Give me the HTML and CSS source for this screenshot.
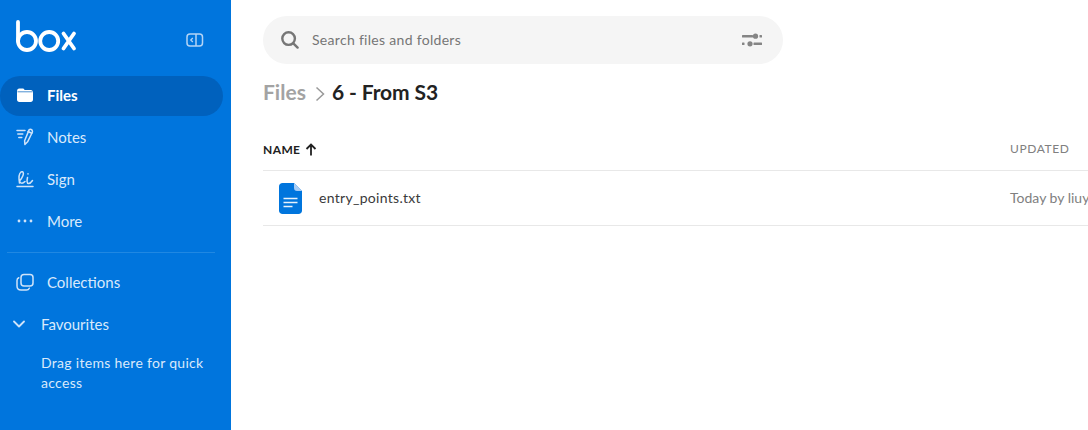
FILE: index.html
```html
<!DOCTYPE html>
<html lang="en">
<head>
<meta charset="utf-8">
<title>Files</title>
<link rel="stylesheet" href="styles.css">
</head>
<body>
<aside class="sidebar">
  <div class="brand">
    <svg class="logo" width="62" height="32" viewBox="0 0 62 32" fill="none" stroke="#fff" stroke-width="3.8" stroke-linecap="round" aria-label="box">
      <path d="M3 2v19"/>
      <circle cx="12" cy="21" r="9"/>
      <circle cx="34.200" cy="21" r="9"/>
      <path d="M48.500 13.500l10.500 15M59 13.500l-10.500 15"/>
    </svg>
    <svg class="collapse" width="18" height="14" viewBox="0 0 18 14" fill="none" stroke="#b3d4f5" stroke-width="1.500">
      <rect x="1" y="1" width="15.500" height="12" rx="3"/>
      <path d="M10 1v12"/>
      <path d="M6.800 5L4.800 7l2 2" stroke-width="1.300"/>
    </svg>
  </div>
  <nav class="nav">
    <a class="nav-item active">
      <svg class="nav-icon" width="18" height="16" viewBox="0 0 18 16" fill="#fff"><path d="M1 4.500C1 2.600 1.800 1.600 3.400 1.600h3c1 0 1.600.4 2.200 1.400h6c1.600 0 2.400.9 2.400 2.400v7.200c0 1.500-.9 2.400-2.400 2.400H3.400C1.900 15 1 14.100 1 12.600z"/><path d="M1.500 4.800h15" stroke="#0061bd" stroke-width=".7"/></svg>
      <span>Files</span>
    </a>
    <a class="nav-item">
      <svg class="nav-icon" width="18" height="18" viewBox="0 0 18 18" fill="none" stroke="#cfe3f9" stroke-width="1.500" stroke-linecap="round" stroke-linejoin="round"><path d="M1 2.500h8M1.800 6h5M2.800 9.500h3"/><path d="M13.200 1.600c1.200-.8 3-.1 3.200 1.400.1.600 0 1-.2 1.500l-4.600 9.300-2.700 2.700-.3-3.800z"/><path d="M12 3.500l3.800 1.800"/></svg>
      <span>Notes</span>
    </a>
    <a class="nav-item">
      <svg class="nav-icon" width="18" height="18" viewBox="0 0 18 18" fill="none" stroke="#cfe3f9" stroke-width="1.500" stroke-linecap="round" stroke-linejoin="round"><path d="M1 16.500h16"/><path d="M3.500 13C2.800 9 3 3.500 5 2c2-1.200 3 1 2 3.500C6 8 4.500 10 3.500 11c.5 2.500 3 3 5.500.5"/><path d="M11.500 7.500c-.5 2.500-1 6 1 6 1.500 0 3-1.500 4-3"/><path d="M12 3.800v.1"/></svg>
      <span>Sign</span>
    </a>
    <a class="nav-item">
      <svg class="nav-icon" width="18" height="4" viewBox="0 0 18 4" fill="#cfe3f9"><circle cx="3" cy="2" r="1.400"/><circle cx="9" cy="2" r="1.400"/><circle cx="15" cy="2" r="1.400"/></svg>
      <span>More</span>
    </a>
  </nav>
  <hr class="divider">
  <nav class="nav">
    <a class="nav-item">
      <svg class="nav-icon" width="18" height="18" viewBox="0 0 18 18" fill="none" stroke="#cfe3f9" stroke-width="1.500" stroke-linecap="round"><rect x="5" y="1.500" width="12" height="11.500" rx="3"/><path d="M2.800 4.800C1.600 5.300 1 6.200 1 7.500v5.500c0 2.400 1.500 4 4 4h5.500c1.300 0 2.300-.7 2.800-1.800"/></svg>
      <span>Collections</span>
    </a>
    <a class="nav-item nav-toggle">
      <svg class="chevron" width="12" height="8" viewBox="0 0 12 8" fill="none" stroke="#cfe3f9" stroke-width="1.800" stroke-linecap="round" stroke-linejoin="round"><path d="M1 1.500l5 5 5-5"/></svg>
      <span>Favourites</span>
    </a>
  </nav>
  <p class="hint">Drag items here for quick access</p>
</aside>
<main class="main">
  <div class="search">
    <svg class="search-icon" width="18" height="18" viewBox="0 0 18 18" fill="none" stroke="#767676" stroke-width="2.400" stroke-linecap="round"><circle cx="7.600" cy="7.600" r="6.300"/><path d="M12.300 12.300l4.300 4.300"/></svg>
    <span class="search-text">Search files and folders</span>
    <svg class="filter-icon" width="20" height="14" viewBox="0 0 20 14" fill="#858585"><rect x="0" y="2" width="11" height="2.400" rx=".5"/><circle cx="13.500" cy="3.200" r="2.600"/><rect x="17.500" y="2" width="2.500" height="2.400" rx=".5"/><rect x="0" y="9.600" width="2.500" height="2.400" rx=".5"/><circle cx="8" cy="10.800" r="2.600"/><rect x="11.500" y="9.600" width="8.500" height="2.400" rx=".5"/></svg>
  </div>
  <div class="crumbs">
    <span class="crumb-parent">Files</span>
    <svg class="crumb-sep" width="10" height="16" viewBox="0 0 10 16" fill="none" stroke="#999" stroke-width="1.500"><path d="M1.500 1.500L8.500 8l-7 6.500"/></svg>
    <span class="crumb-current">6 - From S3</span>
  </div>
  <div class="table">
    <div class="row head">
      <div class="cell-name">
        <span class="col-name">NAME</span>
        <svg width="12" height="13" viewBox="0 0 12 13" fill="none" stroke="#222" stroke-width="1.800"><path d="M6 12.500V1.500M1.500 6L6 1.500 10.500 6"/></svg>
      </div>
      <div class="col-updated">UPDATED</div>
    </div>
    <div class="row file">
      <div class="cell-file">
        <svg width="23" height="31" viewBox="0 0 23 31"><path d="M3.500 0H15l8 8v19.500c0 2-1.500 3.500-3.500 3.500h-16C1.500 31 0 29.500 0 27.500v-24C0 1.500 1.500 0 3.500 0z" fill="#0075dd"/><path d="M15 0l8 8h-5c-1.800 0-3-1.200-3-3z" fill="#a8cdf5"/><path d="M4.500 15.500h14M4.500 19.500h14M4.500 23.500h9" stroke="#e8f2fc" stroke-width="1.500"/></svg>
        <span class="file-name">entry_points.txt</span>
      </div>
      <div class="cell-updated">Today by liuyang</div>
    </div>
  </div>
</main>
</body>
</html>
```
FILE: styles.css
```css
* { box-sizing: border-box; }
html, body { height: 100%; }
body {
  margin: 0;
  display: flex;
  overflow: hidden;
  font-family: Lato, "Noto Sans", sans-serif;
  background: #fff;
  color: #222;
}
.sidebar {
  flex: 0 0 231px;
  height: 430px;
  background: #0075dd;
  color: #d9e9fb;
}
.brand {
  height: 76px;
  display: flex;
  align-items: flex-start;
  justify-content: space-between;
  padding: 20px 27px 0 15px;
}
.collapse { margin-top: 13px; }
.nav {
  display: flex;
  flex-direction: column;
  gap: 2px;
  width: 223px;
}
.nav-item {
  height: 40px;
  display: flex;
  align-items: center;
  padding: 0 0 2px 16px;
  font-size: 15px;
  border-radius: 20px;
}
.nav-icon { flex: 0 0 18px; margin-right: 13px; }
.active {
  background: #0061bd;
  color: #fff;
  font-weight: 700;
}
.divider {
  margin: 10px 16px 10px 7px;
  border: 0;
  border-top: 1px solid #2088e2;
}
.chevron { margin: 0 16px 0 -3px; }
.nav-toggle { padding-left: 16px; }
.hint {
  margin: 8px 20px 0 41px;
  font-size: 14px;
  line-height: 20px;
  letter-spacing: .3px;
}
.main {
  flex: 1;
  min-width: 0;
  padding: 16px 0 0 32px;
}
.search {
  width: 520px;
  height: 48px;
  border-radius: 24px;
  background: #f5f5f5;
  display: flex;
  align-items: center;
  padding: 0 21px 0 18px;
}
.search-text {
  flex: 1;
  margin: 0 0 2px 13px;
  font-size: 14px;
  letter-spacing: .3px;
  color: #767676;
}
.crumbs {
  display: flex;
  align-items: center;
  height: 28px;
  margin-top: 13px;
}
.crumb-parent {
  font-size: 21px;
  font-weight: 700;
  color: #a3a3a3;
}
.crumb-sep { margin: 5px 7px 0 9px; }
.crumb-current {
  font-size: 21px;
  font-weight: 700;
  letter-spacing: -.1px;
  color: #222;
}
.table { margin-top: 24px; width: 900px; }
.row {
  display: flex;
  align-items: center;
  border-bottom: 1px solid #e8e8e8;
}
.head { height: 42px; }
.file { height: 55px; }
.cell-name, .cell-file {
  width: 747px;
  display: flex;
  align-items: center;
}
.cell-name { gap: 5px; }
.col-name {
  font-size: 12px;
  font-weight: 700;
  letter-spacing: .4px;
  color: #222;
}
.col-updated {
  margin-bottom: 2px;
  font-size: 12px;
  letter-spacing: .6px;
  color: #808080;
}
.cell-file { padding-left: 16px; }
.file-name {
  margin: 0 0 2px 17px;
  font-size: 14px;
  letter-spacing: .3px;
  color: #3a3a3a;
}
.cell-updated {
  margin-bottom: 2px;
  font-size: 14px;
  color: #808080;
  white-space: nowrap;
}
```
